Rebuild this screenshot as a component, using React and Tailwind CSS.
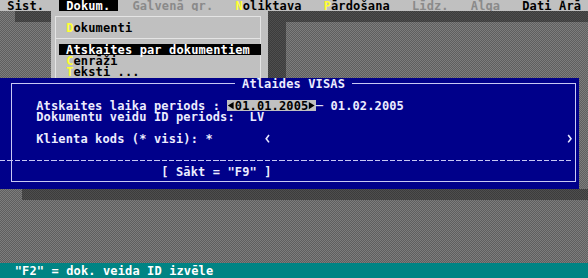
import React from "react";

const Tri = ({ dir }) => (
  <span className="inline-block w-[7.35px] h-[11.12px] align-top">
    <svg width="7.35" height="11.12" viewBox="0 0 7.35 11.12">
      {dir === "l" ? (
        <polygon points="0.8,5.6 6.6,2 6.6,9.2" fill="#000" />
      ) : (
        <polygon points="6.6,5.6 0.8,2 0.8,9.2" fill="#000" />
      )}
    </svg>
  </span>
);

const Chev = ({ dir }) => (
  <span className="inline-block w-[7.35px] h-[11.12px] align-top">
    <svg width="7.35" height="11.12" viewBox="0 0 7.35 11.12">
      {dir === "l" ? (
        <polyline points="5,2 2.2,5.7 5,9.4" fill="none" stroke="#e8e8ff" strokeWidth="1.6" />
      ) : (
        <polyline points="2.2,2 5,5.7 2.2,9.4" fill="none" stroke="#e8e8ff" strokeWidth="1.6" />
      )}
    </svg>
  </span>
);

const row = "h-[11.12px] leading-[12.2px] whitespace-pre shrink-0";

function Dropdown() {
  return (
    <div className="absolute left-[51.45px] top-[11.12px] flex">
      <div className="w-[216.5px] h-[80px] bg-[#c0c0c0] pt-[5px] pl-[3.2px] pr-[6.6px]">
        <div className="h-full border-[1.5px] border-b-0 border-[#e4e4e4] flex flex-col">
          <div className="h-[4.62px] shrink-0" />
          <div className={`${row} pl-[10.5px] text-black`}>
            <span className="text-[#ffff30]">D</span>okumenti
          </div>
          <div className="h-[11.12px] shrink-0 flex items-center">
            <div className="w-full h-[1.5px] bg-[#e4e4e4]" />
          </div>
          <div className={`${row} ml-[3.15px] mr-[-0.2px] px-[7.35px] bg-black text-white`}>
            Atskaites par dokumentiem
          </div>
          <div className={`${row} pl-[10.5px] text-black`}>
            <span className="text-[#ffff30]">C</span>enrāži
          </div>
          <div className={`${row} pl-[10.5px] text-black`}>
            <span className="text-[#ffff30]">T</span>eksti ...
          </div>
        </div>
      </div>
      <div className="w-[18px] h-[80px] mt-[11.12px] bg-[repeating-conic-gradient(#3c3c3c_0_25%,#4e4e4e_0_50%)] bg-[length:2px_2px]" />
    </div>
  );
}

export default function App() {
  return (
    <div className="w-[588px] h-[278px] relative overflow-hidden font-['DejaVu_Sans_Mono',monospace] font-bold text-[12px] tracking-[0.13px] flex flex-col bg-[repeating-conic-gradient(#5f5f5f_0_25%,#7d7d7d_0_50%)] bg-[length:2px_2px]">
      {/* menu bar */}
      <div className={`${row} bg-[#c0c0c0] text-black`}>
        {" Sist.  "}
        <span className="bg-black text-white">{" Dokum. "}</span>
        {"  "}
        <span className="text-[#8a8a8a]">Galvenā gr.</span>
        {"   "}
        <span className="text-[#ffff30]">N</span>
        {"oliktava   "}
        <span className="text-[#ffff30]">P</span>
        {"ārdošana   "}
        <span className="text-[#8a8a8a]">Līdz.</span>
        {"   "}
        <span className="text-[#8a8a8a]">Alga</span>
        {"   Dati "}
        {"Ārā"}
      </div>

      {/* menu bar shadow */}
      <div className="h-[11.12px] ml-[14.7px] shrink-0 bg-[repeating-conic-gradient(#3c3c3c_0_25%,#4e4e4e_0_50%)] bg-[length:2px_2px]" />

      <div className="h-[55.6px] shrink-0" />

      {/* dialog */}
      <div className="relative z-10 w-[579px] h-[111.2px] shrink-0 bg-[#00008a] pt-[5px] pl-[10.5px] pr-[3px] pb-[7px]">
        <div className="relative h-full border-[1.5px] border-[#c8c8f4] flex flex-col text-[#ececff]">
          <div className="absolute left-[223.2px] top-[-6.3px] h-[11.12px] leading-[12.2px] whitespace-pre bg-[#00008a] text-[#ececff]">
            {" Atlaides VISAS "}
          </div>
          <div className="h-[15.7px] shrink-0" />
          <div className={`${row} pl-[24.75px]`}>
            {"Atskaites laika periods : "}
            <span className="bg-[#c0c0c0] text-black inline-block h-[11.12px] align-top">
              <Tri dir="l" />
              {"01.01.2005"}
              <Tri dir="r" />
            </span>
            {"─ 01.02.2005"}
          </div>
          <div className={`${row} pl-[24.75px]`}>{"Dokumentu veidu ID periods:  LV"}</div>
          <div className="h-[11.12px] shrink-0" />
          <div className={`${row} pl-[24.75px]`}>
            {"Klienta kods (* visi): *       "}
            <Chev dir="l" />
            {"                                        "}
            <Chev dir="r" />
          </div>
          <div className="h-[11.12px] shrink-0" />
          <div className="h-[11.12px] shrink-0 flex items-center">
            <div className="h-[1.5px] ml-[-12px] mr-[3px] flex-1 bg-[repeating-linear-gradient(90deg,#c8c8f4_0_5.4px,transparent_5.4px_7.35px)]" />
          </div>
          <div className={`${row} pl-[24.75px]`}>{"                 [ Sākt = \"F9\" ]"}</div>
        </div>
      </div>

      {/* dialog shadow */}
      <div className="h-[11.12px] ml-[22px] shrink-0 bg-[repeating-conic-gradient(#3c3c3c_0_25%,#4e4e4e_0_50%)] bg-[length:2px_2px]" />

      <div className="flex-1" />

      {/* status bar */}
      <div className="h-[15px] shrink-0 bg-[#008484] text-white leading-[16px] whitespace-pre">
        {"  \"F2\" = dok. veida ID izvēle"}
      </div>

      <Dropdown />
    </div>
  );
}
